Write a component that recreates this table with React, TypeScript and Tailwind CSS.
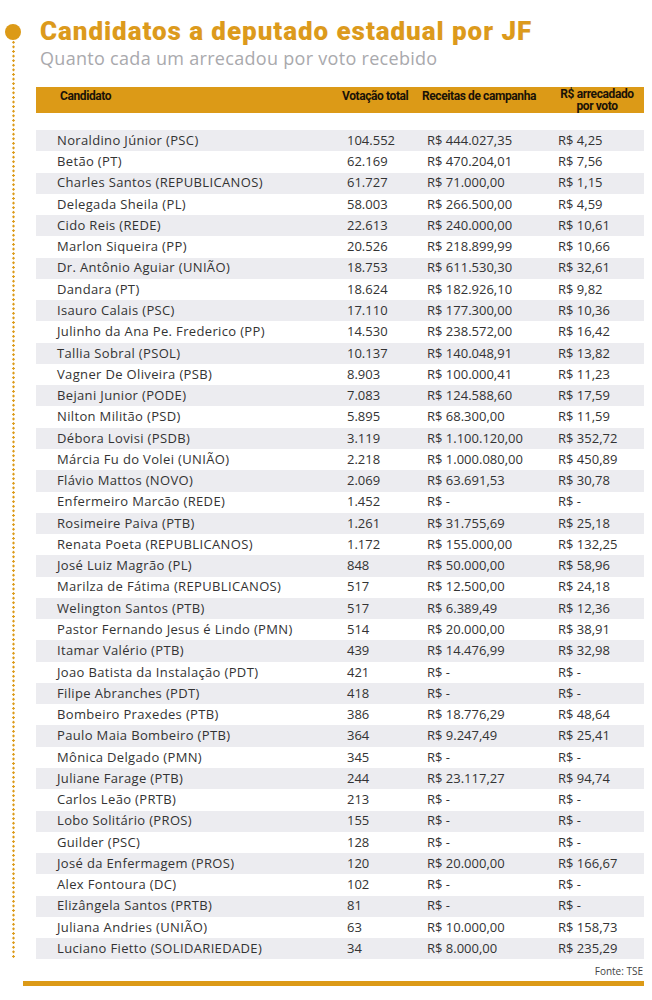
const rows: [string, string, string, string][] = [
  ['Noraldino Júnior (PSC)', '104.552', 'R$ 444.027,35', 'R$ 4,25'],
  ['Betão (PT)', '62.169', 'R$ 470.204,01', 'R$ 7,56'],
  ['Charles Santos (REPUBLICANOS)', '61.727', 'R$ 71.000,00', 'R$ 1,15'],
  ['Delegada Sheila (PL)', '58.003', 'R$ 266.500,00', 'R$ 4,59'],
  ['Cido Reis (REDE)', '22.613', 'R$ 240.000,00', 'R$ 10,61'],
  ['Marlon Siqueira (PP)', '20.526', 'R$ 218.899,99', 'R$ 10,66'],
  ['Dr. Antônio Aguiar (UNIÃO)', '18.753', 'R$ 611.530,30', 'R$ 32,61'],
  ['Dandara (PT)', '18.624', 'R$ 182.926,10', 'R$ 9,82'],
  ['Isauro Calais (PSC)', '17.110', 'R$ 177.300,00', 'R$ 10,36'],
  ['Julinho da Ana Pe. Frederico (PP)', '14.530', 'R$ 238.572,00', 'R$ 16,42'],
  ['Tallia Sobral (PSOL)', '10.137', 'R$ 140.048,91', 'R$ 13,82'],
  ['Vagner De Oliveira (PSB)', '8.903', 'R$ 100.000,41', 'R$ 11,23'],
  ['Bejani Junior (PODE)', '7.083', 'R$ 124.588,60', 'R$ 17,59'],
  ['Nilton Militão (PSD)', '5.895', 'R$ 68.300,00', 'R$ 11,59'],
  ['Débora Lovisi (PSDB)', '3.119', 'R$ 1.100.120,00', 'R$ 352,72'],
  ['Márcia Fu do Volei (UNIÃO)', '2.218', 'R$ 1.000.080,00', 'R$ 450,89'],
  ['Flávio Mattos (NOVO)', '2.069', 'R$ 63.691,53', 'R$ 30,78'],
  ['Enfermeiro Marcão (REDE)', '1.452', 'R$ -', 'R$ -'],
  ['Rosimeire Paiva (PTB)', '1.261', 'R$ 31.755,69', 'R$ 25,18'],
  ['Renata Poeta (REPUBLICANOS)', '1.172', 'R$ 155.000,00', 'R$ 132,25'],
  ['José Luiz Magrão (PL)', '848', 'R$ 50.000,00', 'R$ 58,96'],
  ['Marilza de Fátima (REPUBLICANOS)', '517', 'R$ 12.500,00', 'R$ 24,18'],
  ['Welington Santos (PTB)', '517', 'R$ 6.389,49', 'R$ 12,36'],
  ['Pastor Fernando Jesus é Lindo (PMN)', '514', 'R$ 20.000,00', 'R$ 38,91'],
  ['Itamar Valério (PTB)', '439', 'R$ 14.476,99', 'R$ 32,98'],
  ['Joao Batista da Instalação (PDT)', '421', 'R$ -', 'R$ -'],
  ['Filipe Abranches (PDT)', '418', 'R$ -', 'R$ -'],
  ['Bombeiro Praxedes (PTB)', '386', 'R$ 18.776,29', 'R$ 48,64'],
  ['Paulo Maia Bombeiro (PTB)', '364', 'R$ 9.247,49', 'R$ 25,41'],
  ['Mônica Delgado (PMN)', '345', 'R$ -', 'R$ -'],
  ['Juliane Farage (PTB)', '244', 'R$ 23.117,27', 'R$ 94,74'],
  ['Carlos Leão (PRTB)', '213', 'R$ -', 'R$ -'],
  ['Lobo Solitário (PROS)', '155', 'R$ -', 'R$ -'],
  ['Guilder (PSC)', '128', 'R$ -', 'R$ -'],
  ['José da Enfermagem (PROS)', '120', 'R$ 20.000,00', 'R$ 166,67'],
  ['Alex Fontoura (DC)', '102', 'R$ -', 'R$ -'],
  ['Elizângela Santos (PRTB)', '81', 'R$ -', 'R$ -'],
  ['Juliana Andries (UNIÃO)', '63', 'R$ 10.000,00', 'R$ 158,73'],
  ['Luciano Fietto (SOLIDARIEDADE)', '34', 'R$ 8.000,00', 'R$ 235,29'],
]

const cols = 'grid grid-cols-[290px_80px_131px_1fr]'

export default function App() {
  return (
    <div className="w-[652px] h-[1000px] bg-white flex flex-col font-['Open_Sans',sans-serif]">
      <div className="flex flex-row">
        {/* trilho lateral com bolinha e pontilhado */}
        <div className="w-[26px] flex flex-col items-center">
          <div className="mt-[24px] w-[16px] h-[16px] rounded-full bg-[#dc9a17]" />
          <div className="w-[3px] h-[918px] bg-[radial-gradient(circle,#dc9a17_1px,transparent_1.4px)] bg-[length:3px_4.6px]" />
        </div>

        <div className="flex flex-col">
          <h1 className="ml-[14px] mt-[15px] text-[26px] leading-[32px] font-black text-[#dc9a1c] font-['Roboto',sans-serif] tracking-[0.95px] whitespace-nowrap">
            Candidatos a deputado estadual por JF
          </h1>
          <p className="ml-[14px] text-[18px] leading-[22px] text-[#a9a9ad] tracking-[0.3px]">
            Quanto cada um arrecadou por voto recebido
          </p>

          <div className="ml-[10px] mt-[18px] w-[608px]">
            <div className={`${cols} h-[26px] bg-[#dc9a17] pl-[24px] pt-[1px] text-[12px] leading-[12px] font-bold tracking-[-0.4px] whitespace-nowrap text-[#1a1207] font-['Roboto',sans-serif]`}>
              <span className="pt-[2px]">Candidato</span>
              <span className="pt-[2px] -ml-[8px]">Votação total</span>
              <span className="pt-[2px] -ml-[8px]">Receitas de campanha</span>
              <span className="-ml-[4px] w-[80px] flex flex-col items-center">
                <span>R$ arrecadado</span>
                <span>por voto</span>
              </span>
            </div>

            <div className="mt-[17px] flex flex-col text-[13px] text-[#333333]">
              {rows.map(([name, votes, total, perVote], i) => (
                <div key={name} className={`${cols} h-[21.28px] items-center pl-[21px] ${i % 2 === 0 ? 'bg-[#ececf0]' : 'bg-white'}`}>
                  <span className="tracking-[0.35px]">{name}</span>
                  <span>{votes}</span>
                  <span>{total}</span>
                  <span>{perVote}</span>
                </div>
              ))}
            </div>

            <p className="mt-[6px] text-right text-[10px] leading-[12px] text-[#444444] pr-[1px]">Fonte: TSE</p>
          </div>
        </div>
      </div>

      <div className="ml-[23px] mt-[4px] w-[621px] h-[5px] bg-[#dc9a17]" />
    </div>
  )
}
